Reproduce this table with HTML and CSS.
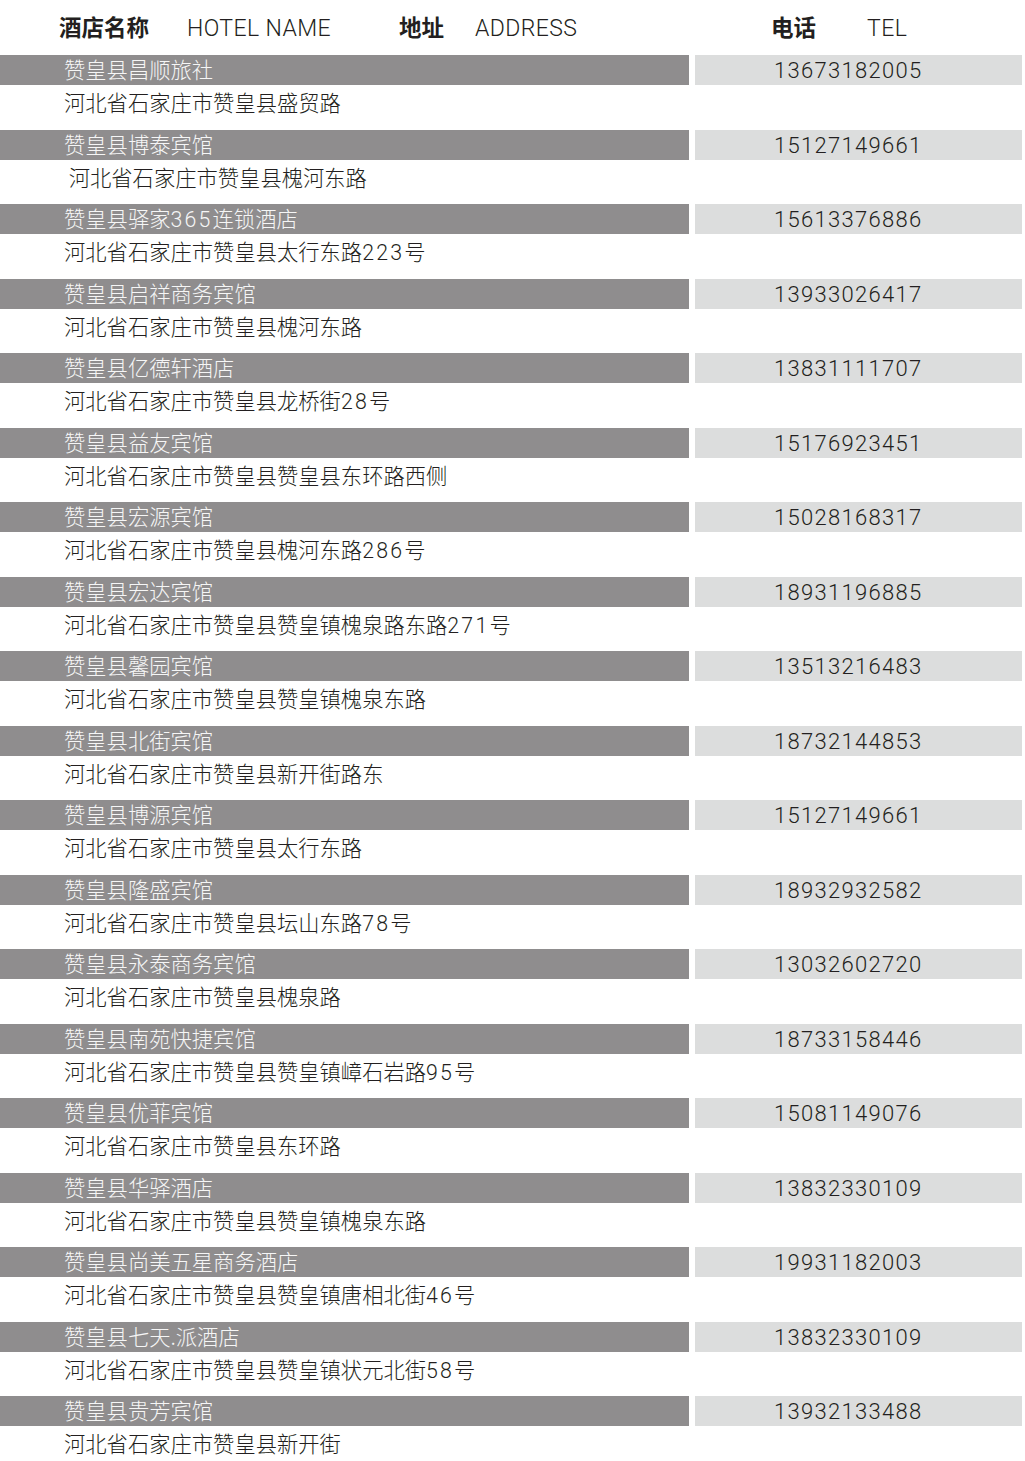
FILE: index.html
```html
<!DOCTYPE html>
<html lang="zh-CN">
<head>
<meta charset="utf-8">
<title>酒店名称</title>
<link rel="stylesheet" href="styles.css">
</head>
<body>
<div class="page">
  <div class="head">
    <div class="h-name"><span class="h-cn">酒店名称</span><span class="h-en">HOTEL NAME</span></div>
    <div class="h-addr"><span class="h-cn">地址</span><span class="h-en">ADDRESS</span></div>
    <div class="h-tel"><span class="h-cn">电话</span><span class="h-en">TEL</span></div>
  </div>
  <div class="list">
    <div class="row"><div class="name">赞皇县昌顺旅社</div><div class="tel">13673182005</div><div class="addr">河北省石家庄市赞皇县盛贸路</div></div>
    <div class="row"><div class="name">赞皇县博泰宾馆</div><div class="tel">15127149661</div><div class="addr"> 河北省石家庄市赞皇县槐河东路</div></div>
    <div class="row"><div class="name">赞皇县驿家<span class="n">365</span>连锁酒店</div><div class="tel">15613376886</div><div class="addr">河北省石家庄市赞皇县太行东路<span class="n">223</span>号</div></div>
    <div class="row"><div class="name">赞皇县启祥商务宾馆</div><div class="tel">13933026417</div><div class="addr">河北省石家庄市赞皇县槐河东路</div></div>
    <div class="row"><div class="name">赞皇县亿德轩酒店</div><div class="tel">13831111707</div><div class="addr">河北省石家庄市赞皇县龙桥街<span class="n">28</span>号</div></div>
    <div class="row"><div class="name">赞皇县益友宾馆</div><div class="tel">15176923451</div><div class="addr">河北省石家庄市赞皇县赞皇县东环路西侧</div></div>
    <div class="row"><div class="name">赞皇县宏源宾馆</div><div class="tel">15028168317</div><div class="addr">河北省石家庄市赞皇县槐河东路<span class="n">286</span>号</div></div>
    <div class="row"><div class="name">赞皇县宏达宾馆</div><div class="tel">18931196885</div><div class="addr">河北省石家庄市赞皇县赞皇镇槐泉路东路<span class="n">271</span>号</div></div>
    <div class="row"><div class="name">赞皇县馨园宾馆</div><div class="tel">13513216483</div><div class="addr">河北省石家庄市赞皇县赞皇镇槐泉东路</div></div>
    <div class="row"><div class="name">赞皇县北街宾馆</div><div class="tel">18732144853</div><div class="addr">河北省石家庄市赞皇县新开街路东</div></div>
    <div class="row"><div class="name">赞皇县博源宾馆</div><div class="tel">15127149661</div><div class="addr">河北省石家庄市赞皇县太行东路</div></div>
    <div class="row"><div class="name">赞皇县隆盛宾馆</div><div class="tel">18932932582</div><div class="addr">河北省石家庄市赞皇县坛山东路<span class="n">78</span>号</div></div>
    <div class="row"><div class="name">赞皇县永泰商务宾馆</div><div class="tel">13032602720</div><div class="addr">河北省石家庄市赞皇县槐泉路</div></div>
    <div class="row"><div class="name">赞皇县南苑快捷宾馆</div><div class="tel">18733158446</div><div class="addr">河北省石家庄市赞皇县赞皇镇嶂石岩路<span class="n">95</span>号</div></div>
    <div class="row"><div class="name">赞皇县优菲宾馆</div><div class="tel">15081149076</div><div class="addr">河北省石家庄市赞皇县东环路</div></div>
    <div class="row"><div class="name">赞皇县华驿酒店</div><div class="tel">13832330109</div><div class="addr">河北省石家庄市赞皇县赞皇镇槐泉东路</div></div>
    <div class="row"><div class="name">赞皇县尚美五星商务酒店</div><div class="tel">19931182003</div><div class="addr">河北省石家庄市赞皇县赞皇镇唐相北街<span class="n">46</span>号</div></div>
    <div class="row"><div class="name">赞皇县七天.派酒店</div><div class="tel">13832330109</div><div class="addr">河北省石家庄市赞皇县赞皇镇状元北街<span class="n">58</span>号</div></div>
    <div class="row"><div class="name">赞皇县贵芳宾馆</div><div class="tel">13932133488</div><div class="addr">河北省石家庄市赞皇县新开街</div></div>
  </div>
</div>
</body>
</html>
```
FILE: styles.css
```css
html, body {
  margin: 0;
  padding: 0;
  background: #ffffff;
}
body {
  width: 1025px;
  height: 1461px;
  overflow: hidden;
  font-family: "Noto Sans CJK SC", sans-serif;
  color: #231f20;
}
.page {
  width: 1025px;
}
.head {
  height: 55px;
  display: flex;
  align-items: center;
  padding-bottom: 4px;
  box-sizing: border-box;
}
.h-name, .h-addr, .h-tel {
  display: flex;
  align-items: baseline;
  white-space: nowrap;
}
.h-name { margin-left: 59px; width: 340px; }
.h-addr { width: 372px; }
.h-cn {
  font-family: "Noto Sans CJK SC", sans-serif;
  font-weight: 700;
  font-size: 22.5px;
  color: #231f20;
}
.h-en {
  font-family: "Roboto", "Liberation Sans", sans-serif;
  font-weight: 300;
  font-size: 23px;
  letter-spacing: 0.4px;
  color: #231f20;
}
.h-name .h-en { margin-left: 38px; }
.h-addr .h-en { margin-left: 31px; }
.h-tel .h-en { margin-left: 51px; }

.row {
  display: grid;
  grid-template-columns: 689px 327px;
  column-gap: 6px;
  grid-template-rows: 30px 44.5px;
}
.name {
  background: #8f8d8e;
  color: #f6f6f6;
  font-weight: 300;
  font-size: 21.3px;
  line-height: 28px;
  padding-left: 64px;
  white-space: nowrap;
}
.tel {
  background: #dcdddd;
  color: #231f20;
  font-family: "Roboto", "Liberation Sans", sans-serif;
  font-weight: 300;
  font-size: 22px;
  letter-spacing: 1.3px;
  line-height: 31px;
  padding-left: 79px;
}
.addr {
  grid-column: 1 / 3;
  font-weight: 300;
  font-size: 21.3px;
  line-height: 34px;
  padding-left: 64px;
  white-space: pre;
}
.n {
  font-family: "Roboto", "Liberation Sans", sans-serif;
  font-weight: 300;
  letter-spacing: 2.2px;
}
```
